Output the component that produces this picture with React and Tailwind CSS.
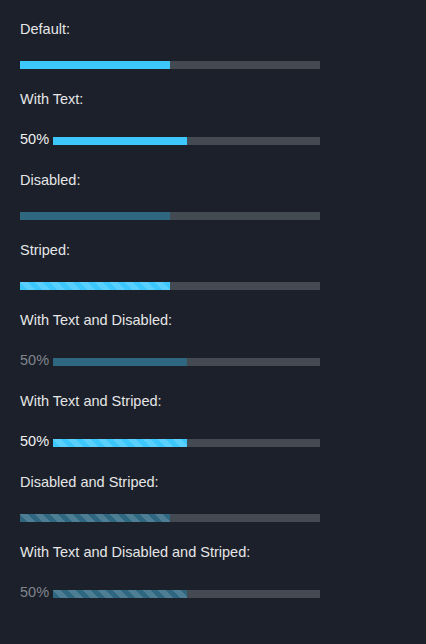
import React from 'react';

const stripes =
  'bg-[linear-gradient(45deg,rgba(255,255,255,0.15)_25%,transparent_25%,transparent_50%,rgba(255,255,255,0.15)_50%,rgba(255,255,255,0.15)_75%,transparent_75%,transparent)] bg-size-[15px_15px] bg-[length:15px_15px]';

const Bar = ({ value, disabled, striped }) => (
  <div className="h-2 w-full bg-[#434a52]">
    <div
      className={`h-full ${disabled ? 'bg-[#2f6780]' : 'bg-[#3cc8fd]'} ${striped ? stripes : ''}`}
      style={{ width: `${value}%` }}
    />
  </div>
);

const ProgressDemo = ({ label, withText, disabled, striped, value = 50 }) => (
  <div className={withText ? 'mb-[21px]' : 'mb-5'}>
    <div className="text-[14.5px] leading-5 text-[#e6e6e6]">{label}</div>
    {withText ? (
      <div className="mt-5 flex items-center gap-1">
        <span className={`text-[14.5px] leading-5 ${disabled ? 'text-[#80868d]' : 'text-[#f0f0f0]'}`}>
          {value}%
        </span>
        <div className="mt-1 flex-1">
          <Bar value={value} disabled={disabled} striped={striped} />
        </div>
      </div>
    ) : (
      <div className="mt-[22px]">
        <Bar value={value} disabled={disabled} striped={striped} />
      </div>
    )}
  </div>
);

export default function App() {
  const demos = [
    { label: 'Default:' },
    { label: 'With Text:', withText: true },
    { label: 'Disabled:', disabled: true },
    { label: 'Striped:', striped: true },
    { label: 'With Text and Disabled:', withText: true, disabled: true },
    { label: 'With Text and Striped:', withText: true, striped: true },
    { label: 'Disabled and Striped:', disabled: true, striped: true },
    { label: 'With Text and Disabled and Striped:', withText: true, disabled: true, striped: true },
  ];

  return (
    <div className="min-h-[644px] w-full bg-[#1b202b] pl-5 pt-[19px] font-['Liberation_Sans',Arial,sans-serif]">
      <div className="w-[300px]">
        {demos.map((d) => (
          <ProgressDemo key={d.label} {...d} />
        ))}
      </div>
    </div>
  );
}
